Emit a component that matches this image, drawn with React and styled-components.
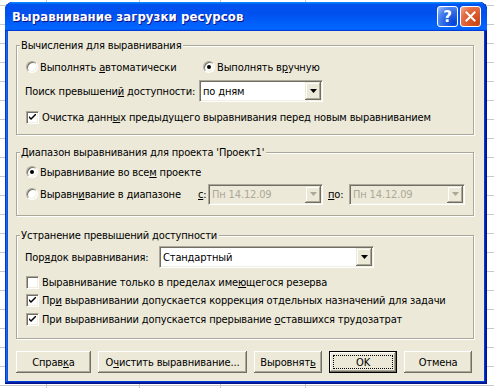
import React from 'react';
import styled, { createGlobalStyle } from 'styled-components';

const Global = createGlobalStyle`
  html, body { margin: 0; padding: 0; background: #fff; }
  body {
    width: 494px; height: 388px; overflow: hidden;
    font-family: "DejaVu Sans Condensed", "Liberation Sans", sans-serif;
    font-size: 11px; color: #000;
    letter-spacing: -0.15px;
  }
`;

const FACE = '#ECE9D8';
const SHADOW = '#ACA899';
const DARK = '#716F64';
const LIGHT = '#F1EFE2';

const Desktop = styled.div`
  position: relative;
  width: 494px;
  height: 388px;
  overflow: hidden;
  background-color: #fff;
  background-image:
    linear-gradient(#c8c8c8, #c8c8c8),
    linear-gradient(#c8c8c8, #c8c8c8),
    linear-gradient(#c8c8c8, #c8c8c8),
    linear-gradient(#c8c8c8, #c8c8c8),
    repeating-linear-gradient(to bottom, transparent 0 5px, #c8c8c8 5px 6px, transparent 6px 19px);
  background-size: 1px 100%, 1px 100%, 1px 100%, 1px 100%, 100% 100%;
  background-position: 46px 0, 139px 0, 220px 0, 305px 0, 0 0;
  background-repeat: no-repeat;
`;

const Window = styled.div`
  position: absolute;
  left: 5px;
  top: 2px;
  width: 482px;
  height: 382px;
  box-sizing: border-box;
  display: flex;
  flex-direction: column;
  background: #0831d9;
  border-radius: 8px 8px 0 0;
  box-shadow: inset -1px -1px #00138c, inset 1px 1px #0831d9, inset -2px -2px #001ea0,
    inset 2px 2px #166aee, inset -3px -3px #003bda, inset 3px 3px #0855dd;
  overflow: hidden;
`;

const TitleBar = styled.div`
  height: 29px;
  flex: none;
  display: flex;
  align-items: center;
  padding: 0 6px 0 7px;
  border-radius: 8px 8px 0 0;
  background: linear-gradient(180deg, #0997ff, #0053ee 8%, #0050ee 40%, #06f 88%, #06f 93%, #005bff 95%, #003dd7 96%, #003dd7);
`;

const TitleText = styled.div`
  flex: 1;
  color: #fff;
  font-family: "DejaVu Sans Condensed", "DejaVu Sans", sans-serif;
  font-weight: bold;
  font-size: 13px;
  letter-spacing: 0.1px;
  text-shadow: 1px 1px #0f1089;
  white-space: nowrap;
`;

const TitleButtons = styled.div`
  display: flex;
  gap: 2px;
`;

const CaptionButton = styled.div`
  width: 21px;
  height: 21px;
  box-sizing: border-box;
  border: 1px solid #fff;
  border-radius: 3px;
  display: flex;
  align-items: center;
  justify-content: center;
  color: #fff;
  font-family: "DejaVu Sans", sans-serif;
  font-weight: bold;
  font-size: 15px;
  letter-spacing: 0;
  background: ${p => p.$close
    ? 'radial-gradient(circle at 85% 85%, #cc4614 0%, #dc5b2d 45%, #e5704a 70%, #f2b29a 100%)'
    : 'radial-gradient(circle at 85% 85%, #0044d6 0%, #2a66e5 45%, #4d85ef 70%, #a9c3f5 100%)'};
`;

const Client = styled.div`
  flex: 1;
  margin: 0 3px 3px 3px;
  background: ${FACE};
  padding: 0 10px 0 8px;
  display: flex;
  flex-direction: column;
`;

const Group = styled.div`
  position: relative;
  box-sizing: border-box;
  height: ${p => p.$h}px;
  margin-top: ${p => p.$mt}px;
  border: 1px solid ${SHADOW};
  box-shadow: 1px 1px 0 #fff, inset 1px 1px 0 #fff;
  padding: ${p => p.$pt}px 8px 0 8px;
  display: flex;
  flex-direction: column;
  flex: none;
`;

const Legend = styled.div`
  position: absolute;
  top: -7px;
  left: 3px;
  padding: 0 2px 0 1px;
  line-height: 13px;
  background: ${FACE};
  white-space: nowrap;
`;

const Row = styled.div`
  display: flex;
  align-items: center;
  height: ${p => p.$h}px;
  margin-top: ${p => p.$mt || 0}px;
  white-space: nowrap;
`;

const Option = styled.div`
  display: flex;
  align-items: center;
  flex: none;
  width: ${p => (p.$w ? `${p.$w}px` : 'auto')};
`;

const Label = styled.div`
  flex: none;
  width: ${p => (p.$w ? `${p.$w}px` : 'auto')};
  margin-left: ${p => p.$ml || 0}px;
`;

const U = styled.span`
  text-decoration: underline;
  text-underline-offset: 1px;
`;

const RadioBox = styled.span`
  position: relative;
  width: 12px;
  height: 12px;
  box-sizing: border-box;
  margin: 0 2px 0 1px;
  border-radius: 50%;
  background: #fff;
  border: 1px solid;
  border-color: ${SHADOW} #fff #fff ${SHADOW};
  box-shadow: inset 1px 1px ${DARK}, inset -1px -1px ${LIGHT};
  flex: none;
  display: flex;
  align-items: center;
  justify-content: center;
`;

const RadioDot = styled.span`
  width: 4px;
  height: 4px;
  border-radius: 50%;
  background: #000;
`;

const CheckBox = styled.span`
  width: 13px;
  height: 13px;
  box-sizing: border-box;
  margin: 0 3px 0 1px;
  background: #fff;
  border: 1px solid;
  border-color: ${SHADOW} #fff #fff ${SHADOW};
  box-shadow: inset 1px 1px ${DARK}, inset -1px -1px ${LIGHT};
  flex: none;
  display: flex;
  align-items: center;
  justify-content: center;
`;

const Combo = styled.div`
  box-sizing: border-box;
  flex: none;
  width: ${p => p.$w}px;
  height: ${p => p.$h || 21}px;
  display: flex;
  align-items: stretch;
  background: ${p => (p.$disabled ? FACE : '#fff')};
  border: 1px solid;
  border-color: ${SHADOW} #fff #fff ${SHADOW};
  box-shadow: inset 1px 1px ${DARK}, inset -1px -1px ${LIGHT};
  padding: 1px;
`;

const ComboText = styled.div`
  flex: 1;
  display: flex;
  align-items: center;
  padding-left: 2px;
  color: ${p => (p.$disabled ? SHADOW : '#000')};
`;

const DropBtn = styled.div`
  width: 16px;
  flex: none;
  background: ${FACE};
  box-shadow: inset -1px -1px ${DARK}, inset 1px 1px ${FACE}, inset -2px -2px ${SHADOW}, inset 2px 2px #fff;
  display: flex;
  align-items: center;
  justify-content: center;
`;

const ButtonRow = styled.div`
  display: flex;
  gap: 7px;
  margin-top: 12px;
`;

const Button = styled.div`
  position: relative;
  box-sizing: border-box;
  width: ${p => p.$w}px;
  height: 22px;
  flex: none;
  display: flex;
  align-items: center;
  justify-content: center;
  background: ${FACE};
  box-shadow: ${p => (p.$default
    ? `inset 0 0 0 1px #000, inset -2px -2px ${DARK}, inset 2px 2px #fff, inset -3px -3px ${SHADOW}`
    : `inset -1px -1px ${DARK}, inset 1px 1px #fff, inset -2px -2px ${SHADOW}`)};
  white-space: nowrap;
`;

const Focus = styled.span`
  position: absolute;
  inset: 4px;
  border: 1px dotted #000;
`;

const Arrow = ({ disabled }) => (
  <svg width="7" height="4" viewBox="0 0 7 4" style={{ display: 'block' }}>
    <polygon points="0,0 7,0 3.5,4" fill={disabled ? SHADOW : '#000'} />
  </svg>
);

const ComboBox = ({ w, h, text, disabled }) => (
  <Combo $w={w} $h={h} $disabled={disabled}>
    <ComboText $disabled={disabled}>{text}</ComboText>
    <DropBtn>
      <Arrow disabled={disabled} />
    </DropBtn>
  </Combo>
);

const Radio = ({ checked }) => (
  <RadioBox>{checked && <RadioDot />}</RadioBox>
);

const Check = ({ checked }) => (
  <CheckBox>
    {checked && (
      <svg width="7" height="7" viewBox="0 0 7 7" style={{ display: 'block' }}>
        <path d="M0 2 L0 4 L2 6 L7 1 L7 -1 L2 4 Z" fill="#000" />
      </svg>
    )}
  </CheckBox>
);

export default function App() {
  return (
    <>
      <Global />
      <Desktop>
        <Window>
          <TitleBar>
            <TitleText>Выравнивание загрузки ресурсов</TitleText>
            <TitleButtons>
              <CaptionButton>?</CaptionButton>
              <CaptionButton $close>
                <svg width="11" height="11" viewBox="0 0 11 11">
                  <path d="M1.5 1.5 L9.5 9.5 M9.5 1.5 L1.5 9.5" stroke="#fff" strokeWidth="2" strokeLinecap="square" />
                </svg>
              </CaptionButton>
            </TitleButtons>
          </TitleBar>
          <Client>
            <Group $h={90} $mt={14} $pt={11}>
              <Legend>Вычисления для выравнивания</Legend>
              <Row $h={20}>
                <Option $w={177}>
                  <Radio />
                  <span>Выполнять <U>а</U>втоматически</span>
                </Option>
                <Option>
                  <Radio checked />
                  <span>Выполнять в<U>р</U>учную</span>
                </Option>
              </Row>
              <Row $h={22} $mt={3}>
                <Label $w={174}>Поиск превышени<U>й</U> доступности:</Label>
                <ComboBox w={124} h={22} text="по дням" />
              </Row>
              <Row $h={20} $mt={5}>
                <Option>
                  <Check checked />
                  <span>Очистка данн<U>ы</U>х предыдущего выравнивания перед новым выравниванием</span>
                </Option>
              </Row>
            </Group>

            <Group $h={64} $mt={17} $pt={9}>
              <Legend>Диапазон выравнивания для проекта 'Проект1'</Legend>
              <Row $h={20}>
                <Option>
                  <Radio checked />
                  <span>Выравнивание во все<U>м</U> проекте</span>
                </Option>
              </Row>
              <Row $h={22} $mt={1}>
                <Option $w={173}>
                  <Radio />
                  <span>Выравн<U>и</U>вание в диапазоне</span>
                </Option>
                <Label $w={10}><U>с</U>:</Label>
                <ComboBox w={115} text="Пн 14.12.09" disabled />
                <Label $w={21} $ml={5}><U>п</U>о:</Label>
                <ComboBox w={116} text="Пн 14.12.09" disabled />
              </Row>
            </Group>

            <Group $h={104} $mt={19} $pt={10}>
              <Legend>Устранение превышений доступности</Legend>
              <Row $h={22}>
                <Label $w={134}>Пор<U>я</U>док выравнивания:</Label>
                <ComboBox w={215} h={22} text="Стандартный" />
              </Row>
              <Row $h={18} $mt={5}>
                <Option>
                  <Check />
                  <span>Выравнивание только в пределах име<U>ю</U>щегося резерва</span>
                </Option>
              </Row>
              <Row $h={18}>
                <Option>
                  <Check checked />
                  <span>Пр<U>и</U> выравнивании допускается коррекция отдельных назначений для задачи</span>
                </Option>
              </Row>
              <Row $h={18} $mt={1}>
                <Option>
                  <Check checked />
                  <span>При выравнивании допускается прерывание <U>о</U>ставшихся трудозатрат</span>
                </Option>
              </Row>
            </Group>

            <ButtonRow>
              <Button $w={75}>Справ<U>к</U>а</Button>
              <Button $w={149}>О<U>ч</U>истить выравнивание...</Button>
              <Button $w={68}>Выровнят<U>ь</U></Button>
              <Button $w={68} $default>OK<Focus /></Button>
              <Button $w={68}>Отмена</Button>
            </ButtonRow>
          </Client>
        </Window>
      </Desktop>
    </>
  );
}
